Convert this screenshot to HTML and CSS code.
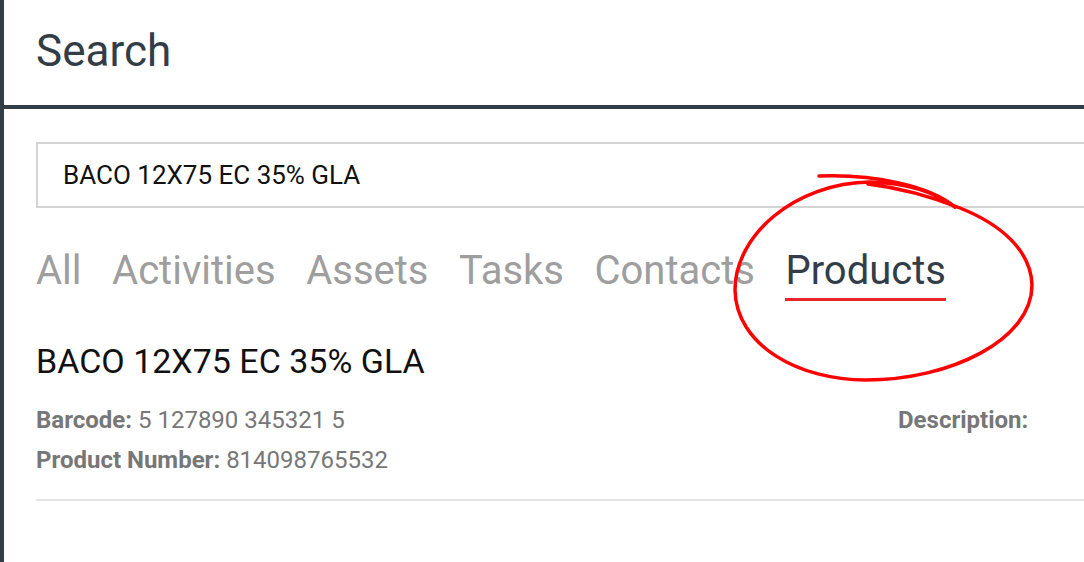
FILE: index.html
```html
<!DOCTYPE html>
<html lang="en">
<head>
    <meta charset="UTF-8">
    <meta name="viewport" content="width=device-width, initial-scale=1.0">
    <title>Search</title>
    <link rel="stylesheet" href="styles.css">
</head>
<body>

    <div class="app">
        <aside class="sidebar"></aside>

        <main class="main">
            <header class="page-header">
                <h1>Search</h1>
            </header>

            <section class="content">
                <div class="search-box">BACO 12X75 EC 35% GLA</div>

                <nav class="tabs">
                    <span class="tab">All</span>
                    <span class="tab">Activities</span>
                    <span class="tab">Assets</span>
                    <span class="tab">Tasks</span>
                    <span class="tab">Contacts</span>
                    <span class="tab active">Products</span>
                </nav>

                <div class="result">
                    <h2>BACO 12X75 EC 35% GLA</h2>
                    <div class="result-details">
                        <div>
                            <p><b>Barcode:</b> 5 127890 345321 5</p>
                            <p><b>Product Number:</b> 814098765532</p>
                        </div>
                        <div>
                            <p><b>Description:</b></p>
                        </div>
                    </div>
                </div>
            </section>
        </main>
    </div>

    <!-- hand drawn annotation round the Products tab -->
    <svg class="annotation" width="1084" height="562" viewBox="0 0 1084 562">
        <path d="M 819 176 C 875 174 930 186 955 207"/>
        <path d="M 955 207 C 935 192 905 183 870 182 C 795 183 735 235 735 290 C 736 345 798 380 866 380 C 950 380 1032 340 1032 285 C 1031 250 1000 224 960 208 C 930 196 900 188 868 184"/>
    </svg>

</body>
</html>
```

FILE: styles.css
```css
body {
    font-family: Roboto, "Liberation Sans", Arial, sans-serif;
    background-color: #fff;
    margin: 0;
    padding: 0;
    overflow: hidden;
}

.app {
    display: flex;
    min-height: 562px;
}

.sidebar {
    width: 4px;
    background-color: #333d48;
    flex-shrink: 0;
}

.main {
    flex: 1;
    min-width: 0;
}

.page-header {
    height: 109px;
    border-bottom: 4px solid #333d48;
    padding-left: 32px;
    box-sizing: border-box;
}

.page-header h1 {
    margin: 0;
    padding-top: 25px;
    font-size: 44px;
    font-weight: 400;
    line-height: 52px;
    color: #333d48;
}

.content {
    padding: 33px 0 0 32px;
}

.search-box {
    height: 66px;
    box-sizing: border-box;
    border: 2px solid #d4d4d4;
    border-right: none;
    padding-left: 25px;
    display: flex;
    align-items: center;
    font-size: 26px;
    color: #111;
}

.tabs {
    display: flex;
    gap: 30.5px;
    margin-top: 39px;
}

.tab {
    font-size: 40px;
    line-height: 47px;
    color: #9e9e9e;
    padding-bottom: 4px;
    border-bottom: 3px solid transparent;
}

.tab.active {
    color: #333d48;
    border-bottom-color: #e8252a;
}

.result {
    margin-top: 40px;
    border-bottom: 2px solid #e5e5e5;
    padding-bottom: 19px;
}

.result h2 {
    margin: 0;
    font-size: 34px;
    font-weight: 400;
    line-height: 40px;
    color: #111;
}

.result-details {
    display: grid;
    grid-template-columns: 862px 1fr;
    margin-top: 19px;
}

.result-details p {
    margin: 0;
    font-size: 24px;
    line-height: 40px;
    color: #777;
}

.result-details b {
    font-weight: 700;
}

.annotation {
    position: absolute;
    left: 0;
    top: 0;
    pointer-events: none;
}

.annotation path {
    fill: none;
    stroke: #f00;
    stroke-width: 3.5;
    stroke-linecap: round;
    stroke-linejoin: round;
}
```
